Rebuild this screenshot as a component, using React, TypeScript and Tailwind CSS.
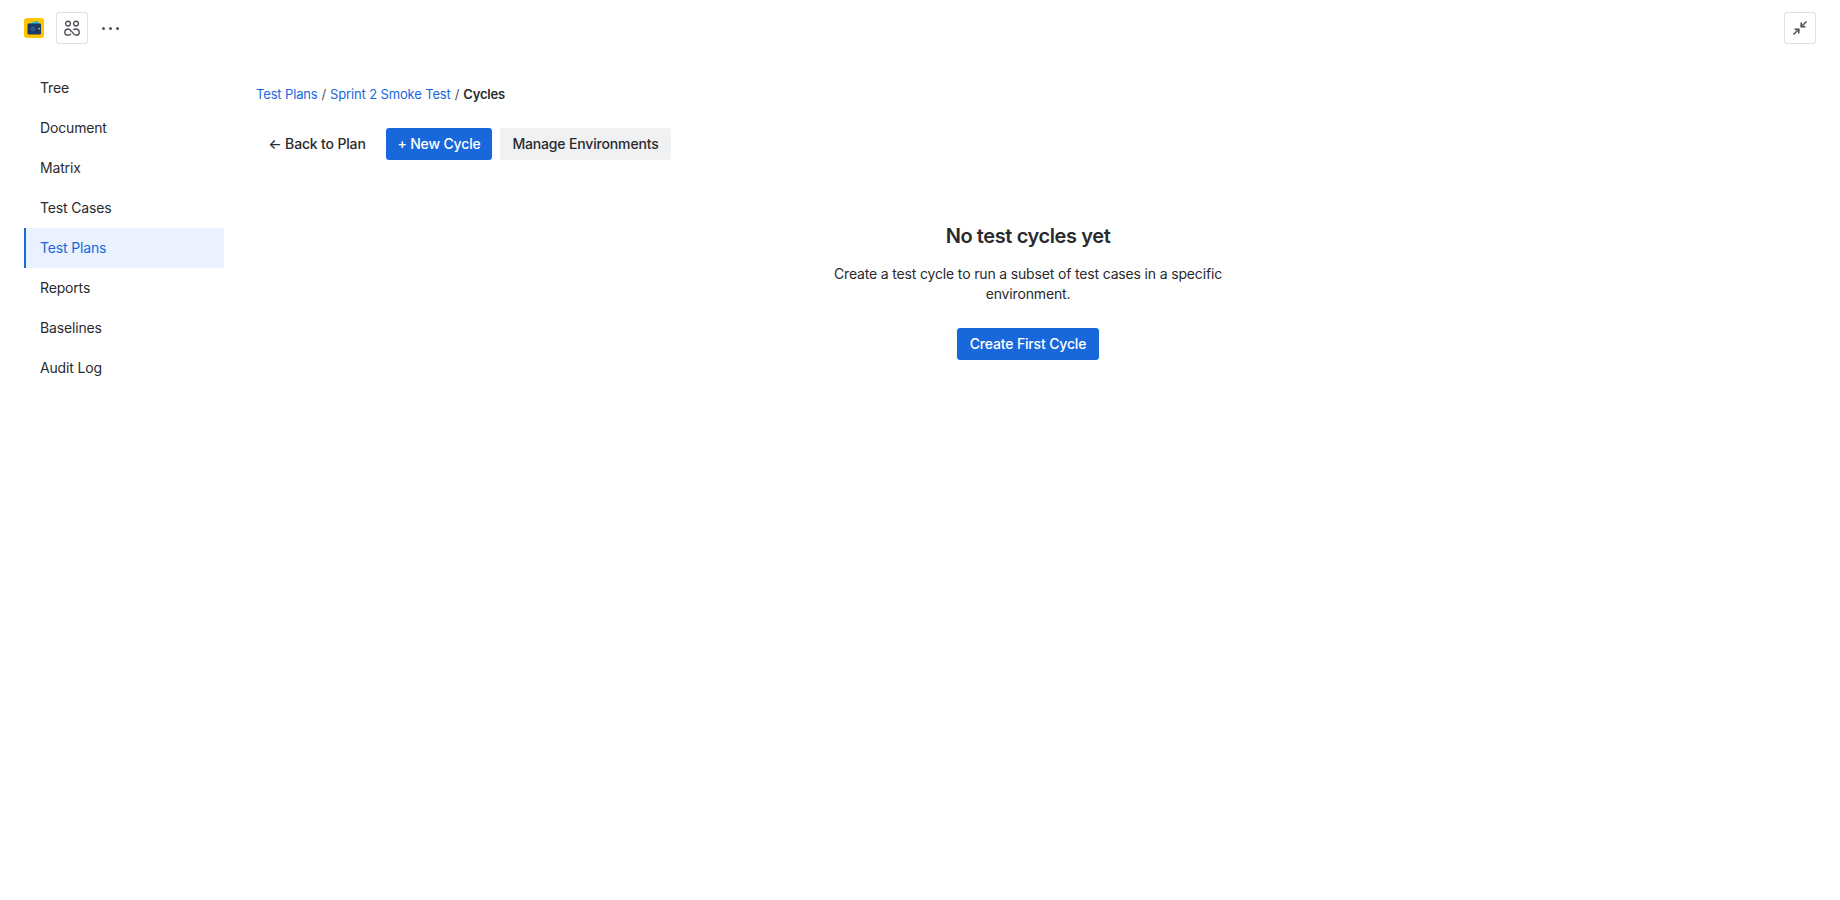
const navItems = ["Tree", "Document", "Matrix", "Test Cases", "Test Plans", "Reports", "Baselines", "Audit Log"]

function WalletLogo() {
  return (
    <svg width="20" height="20" viewBox="0 0 20 20">
      <rect width="20" height="20" rx="3" fill="#ffc400" />
      <path d="M4 6 L13 2.8 L16 6 Z" fill="#2fb5d8" />
      <rect x="3.5" y="5.5" width="13.5" height="11" rx="1.2" fill="#1d3a66" />
      <circle cx="9" cy="11" r="2.4" fill="#2b5a94" />
      <circle cx="15.2" cy="10.6" r="0.9" fill="#ffc400" />
    </svg>
  )
}

function PeopleIcon() {
  return (
    <svg width="16" height="16" viewBox="0 0 16 16" fill="none" stroke="#505258" strokeWidth="1.4">
      <circle cx="4" cy="3.6" r="2.4" />
      <circle cx="12" cy="3.6" r="2.4" />
      <path d="M7 14 C6 14.8 5 15.2 3.8 15.2 C2 15.2 0.8 14 0.8 12.4 C0.8 10.4 2.4 9 4.3 9 C7.5 9 8.5 15.2 12.2 15.2 C14 15.2 15.2 14 15.2 12.4 C15.2 10.4 13.6 9 11.7 9 C10.8 9 10 9.3 9.3 9.9" />
    </svg>
  )
}

function CollapseIcon() {
  return (
    <svg width="16" height="16" viewBox="0 0 16 16" fill="none" stroke="#505258" strokeWidth="1.6">
      <path d="M14.5 1.5 L9.5 6.5 M9.2 2.5 V6.8 H13.5" />
      <path d="M1.5 14.5 L6.5 9.5 M2.5 9.2 H6.8 V13.5" />
    </svg>
  )
}

export default function App() {
  return (
    <div className="min-h-screen bg-white font-['Inter',sans-serif] text-sm tracking-[-0.16px] text-[#292a2e]">
      <header className="flex h-14 items-center justify-between px-6">
        <div className="flex items-center">
          <WalletLogo />
          <button className="ml-3 flex h-8 w-8 items-center justify-center rounded-[3px] border border-[#dcdfe4]">
            <PeopleIcon />
          </button>
          <div className="ml-[14px] flex gap-1">
            <span className="h-[3px] w-[3px] rounded-full bg-[#505258]" />
            <span className="h-[3px] w-[3px] rounded-full bg-[#505258]" />
            <span className="h-[3px] w-[3px] rounded-full bg-[#505258]" />
          </div>
        </div>
        <button className="flex h-8 w-8 items-center justify-center rounded-[3px] border border-[#dcdfe4]">
          <CollapseIcon />
        </button>
      </header>

      <div className="flex pl-6">
        <nav className="mt-3 w-[200px] shrink-0">
          {navItems.map((item) =>
            item === "Test Plans" ? (
              <div key={item} className="flex h-10 items-center border-l-2 border-[#1868db] bg-[#e9f2fe] pl-[14px] text-[#1868db]">
                {item}
              </div>
            ) : (
              <div key={item} className="flex h-10 items-center pl-4">
                {item}
              </div>
            ),
          )}
        </nav>

        <main className="flex-1 pl-8 pr-10 pt-[28px]">
          <div className="flex h-5 items-center gap-1 text-[13px] tracking-[-0.15px]">
            <a className="text-[#1868db]">Test Plans</a>
            <span className="text-[#505258]">/</span>
            <a className="text-[#1868db]">Sprint 2 Smoke Test</a>
            <span className="text-[#505258]">/</span>
            <span className="font-semibold">Cycles</span>
          </div>

          <div className="mt-[24px] flex items-center gap-2">
            <button className="h-8 w-[122px] font-medium">← Back to Plan</button>
            <button className="h-8 w-[106px] rounded-[3px] bg-[#1868db] font-medium text-white">+ New Cycle</button>
            <button className="h-8 w-[171px] rounded-[3px] bg-[#f0f1f2] font-medium">Manage Environments</button>
          </div>

          <div className="mx-auto mt-[64px] flex w-[400px] flex-col items-center text-center">
            <h2 className="text-xl font-semibold leading-6 tracking-[-0.4px]">No test cycles yet</h2>
            <p className="mt-4 leading-5">Create a test cycle to run a subset of test cases in a specific environment.</p>
            <button className="mt-6 h-8 w-[142px] rounded-[3px] bg-[#1868db] font-medium text-white">Create First Cycle</button>
          </div>
        </main>
      </div>
    </div>
  )
}
